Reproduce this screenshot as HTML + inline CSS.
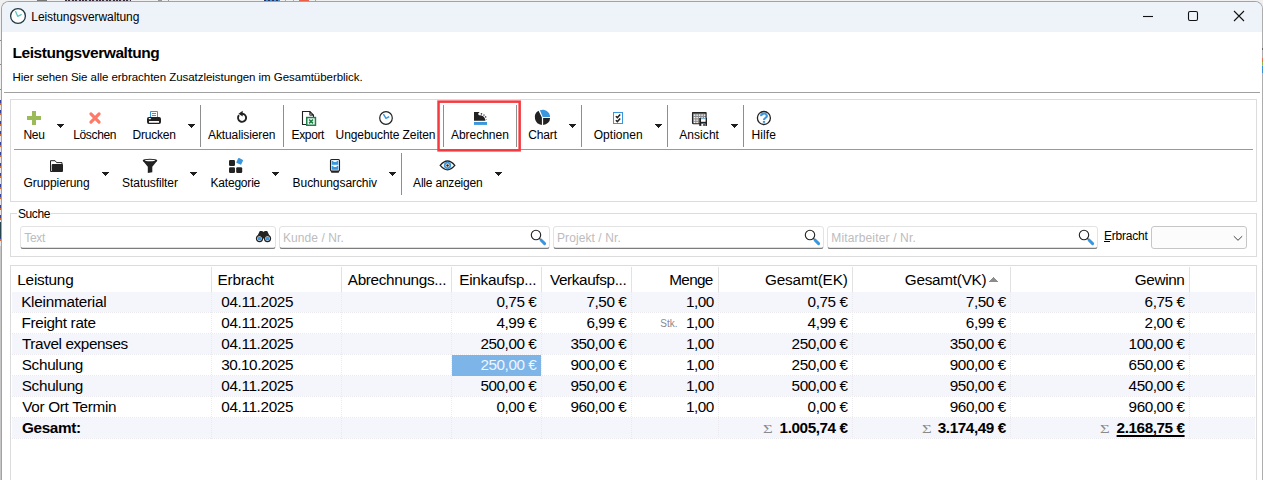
<!DOCTYPE html>
<html><head><meta charset="utf-8"><title>Leistungsverwaltung</title>
<style>
html,body{margin:0;padding:0;width:1263px;height:480px;overflow:hidden}
#root{position:absolute;left:0;top:0;width:1263px;height:480px;overflow:hidden;background:#f0f0f0}
body{width:1263px;height:480px;overflow:hidden;position:relative;background:#f0f0f0;font-family:"Liberation Sans",sans-serif}
.t{position:absolute;white-space:pre;line-height:1;font-family:"Liberation Sans",sans-serif;color:#000}
svg{position:absolute;overflow:visible}
</style></head><body>
<div id="root">
<div style="position:absolute;left:1px;top:1px;width:1260px;height:490px;border:1px solid #a2a2a2;border-right-color:#adadad;border-radius:8px 8px 0 0;background:#fff;overflow:hidden"><div style="height:30px;background:#eef3fa"></div></div>
<div style="position:absolute;left:1262px;top:48px;width:1px;height:2px;background:#666"></div>
<div style="position:absolute;left:1262px;top:58px;width:1px;height:4px;background:#e0714f"></div>
<div style="position:absolute;left:1262px;top:62px;width:1px;height:3px;background:#8bb84a"></div>
<div style="position:absolute;left:1262px;top:66px;width:1px;height:7px;background:#3a8fd6"></div>
<div style="position:absolute;left:37px;top:0px;width:10px;height:1px;background:#777"></div>
<div style="position:absolute;left:65px;top:0px;width:66px;height:1px;background:repeating-linear-gradient(90deg,#3a2a3a 0 2px,#c8c8d0 2px 3.4px)"></div>
<div style="position:absolute;left:158px;top:0px;width:4px;height:1px;background:#999"></div>
<div style="position:absolute;left:168px;top:0px;width:1px;height:1px;background:#999"></div>
<div style="position:absolute;left:264px;top:0px;width:16px;height:1px;background:repeating-linear-gradient(90deg,#335 0 2px,#4a90d0 2px 4px)"></div>
<div style="position:absolute;left:285px;top:0px;width:1px;height:1px;background:#aaa"></div>
<div style="position:absolute;left:293px;top:0px;width:1px;height:1px;background:#aaa"></div>
<div style="position:absolute;left:299px;top:0px;width:10px;height:1px;background:#e8604a"></div>
<div style="position:absolute;left:315px;top:0px;width:1px;height:1px;background:#aaa"></div>
<div style="position:absolute;left:0px;top:40px;width:1px;height:1px;background:#8a8a8a"></div>
<div style="position:absolute;left:0px;top:64px;width:1px;height:1px;background:#8a8a8a"></div>
<div style="position:absolute;left:0px;top:89px;width:1px;height:1px;background:#8a8a8a"></div>
<div style="position:absolute;left:0px;top:100px;width:1px;height:146px;background:repeating-linear-gradient(180deg,#34449c 0 3px,#c86a30 3px 5px,#e4e4e8 5px 10.5px)"></div>
<div style="position:absolute;left:0px;top:222px;width:1px;height:16px;background:#27464f"></div>
<div style="position:absolute;left:0px;top:246px;width:1px;height:234px;background:#c6c6c6"></div>
<svg style="left:9px;top:7px" width="18" height="18" viewBox="0 0 18 18"><circle cx="9" cy="9" r="7.4" fill="#fff" stroke="#1f3a46" stroke-width="1.3"/><path d="M6.6 4.6 L8.7 9.3 L12.2 7.6" fill="none" stroke="#5bc3c6" stroke-width="1.3" stroke-linecap="round" stroke-linejoin="round"/></svg>
<svg style="left:1140px;top:6px" width="110" height="20" viewBox="0 0 110 20"><g fill="none" stroke="#111" stroke-width="1.1"><path d="M3 10.5 H13"/><rect x="48.5" y="5.5" width="9" height="9" rx="1.5"/><path d="M94 5 L104 15 M104 5 L94 15"/></g></svg>
<div style="position:absolute;left:4px;top:92px;width:1256px;height:1px;background:#a0a0a0"></div>
<div style="position:absolute;left:10px;top:99px;width:1245px;height:101px;border:1px solid #dcdcdc"></div>
<div style="position:absolute;left:14px;top:149px;width:1239px;height:1px;background:#999"></div>
<svg style="left:57px;top:124px" width="7" height="4" shape-rendering="crispEdges"><path d="M0 0h7v1h-1v1h-1v1h-1v1h-1v-1h-1v-1h-1v-1h-1z" fill="#1e1e1e"/></svg>
<svg style="left:188px;top:124px" width="7" height="4" shape-rendering="crispEdges"><path d="M0 0h7v1h-1v1h-1v1h-1v1h-1v-1h-1v-1h-1v-1h-1z" fill="#1e1e1e"/></svg>
<svg style="left:569px;top:124px" width="7" height="4" shape-rendering="crispEdges"><path d="M0 0h7v1h-1v1h-1v1h-1v1h-1v-1h-1v-1h-1v-1h-1z" fill="#1e1e1e"/></svg>
<svg style="left:655px;top:124px" width="7" height="4" shape-rendering="crispEdges"><path d="M0 0h7v1h-1v1h-1v1h-1v1h-1v-1h-1v-1h-1v-1h-1z" fill="#1e1e1e"/></svg>
<svg style="left:731px;top:124px" width="7" height="4" shape-rendering="crispEdges"><path d="M0 0h7v1h-1v1h-1v1h-1v1h-1v-1h-1v-1h-1v-1h-1z" fill="#1e1e1e"/></svg>
<div style="position:absolute;left:200px;top:105px;width:1px;height:42px;background:#8e8e8e"></div>
<div style="position:absolute;left:283px;top:105px;width:1px;height:42px;background:#8e8e8e"></div>
<div style="position:absolute;left:443px;top:105px;width:1px;height:42px;background:#8e8e8e"></div>
<div style="position:absolute;left:516px;top:105px;width:1px;height:42px;background:#8e8e8e"></div>
<div style="position:absolute;left:581px;top:105px;width:1px;height:42px;background:#8e8e8e"></div>
<div style="position:absolute;left:667px;top:105px;width:1px;height:42px;background:#8e8e8e"></div>
<div style="position:absolute;left:743px;top:105px;width:1px;height:42px;background:#8e8e8e"></div>
<svg style="left:102px;top:172px" width="7" height="4" shape-rendering="crispEdges"><path d="M0 0h7v1h-1v1h-1v1h-1v1h-1v-1h-1v-1h-1v-1h-1z" fill="#1e1e1e"/></svg>
<svg style="left:190px;top:172px" width="7" height="4" shape-rendering="crispEdges"><path d="M0 0h7v1h-1v1h-1v1h-1v1h-1v-1h-1v-1h-1v-1h-1z" fill="#1e1e1e"/></svg>
<svg style="left:272px;top:172px" width="7" height="4" shape-rendering="crispEdges"><path d="M0 0h7v1h-1v1h-1v1h-1v1h-1v-1h-1v-1h-1v-1h-1z" fill="#1e1e1e"/></svg>
<svg style="left:389px;top:172px" width="7" height="4" shape-rendering="crispEdges"><path d="M0 0h7v1h-1v1h-1v1h-1v1h-1v-1h-1v-1h-1v-1h-1z" fill="#1e1e1e"/></svg>
<svg style="left:495px;top:172px" width="7" height="4" shape-rendering="crispEdges"><path d="M0 0h7v1h-1v1h-1v1h-1v1h-1v-1h-1v-1h-1v-1h-1z" fill="#1e1e1e"/></svg>
<div style="position:absolute;left:401px;top:153px;width:1px;height:42px;background:#8e8e8e"></div>
<svg style="left:436px;top:99px" width="87" height="55"><rect x="2.55" y="2.65" width="81.1" height="48.7" fill="none" stroke="#f5393f" stroke-width="2.5"/></svg>
<svg style="left:27px;top:111px" width="14" height="14"><path d="M5 0h4v5h5v4h-5v5h-4v-5h-5v-4h5z" fill="#9bbb59"/></svg>
<svg style="left:88px;top:111px" width="14" height="14"><path d="M3.1 3.1 L10.9 10.9 M10.9 3.1 L3.1 10.9" stroke="#ff7a66" stroke-width="2.2" stroke-linecap="square" fill="none"/><path d="M2.9 2.9 L11.1 11.1 M11.1 2.9 L2.9 11.1" stroke="#ff7a66" stroke-width="3" stroke-linecap="round" fill="none"/></svg>
<svg style="left:146px;top:110px" width="16" height="16"><path d="M4.5 7.5 V1.5 H11.5 V7.5" fill="#fff" stroke="#3a96dd" stroke-width="1"/><path d="M6 3.5h4M6 5.5h4" stroke="#3a96dd" stroke-width="1"/><rect x="1" y="6.9" width="14" height="7" rx="1.9" fill="#222"/><rect x="3" y="10.9" width="10" height="1.9" rx="0.4" fill="#fff"/><rect x="2.7" y="8.1" width="2.2" height="1.1" rx="0.4" fill="#fff"/></svg>
<svg style="left:234px;top:110px" width="16" height="16"><path d="M8.05 3.75 A4.05 4.05 0 1 1 4.95 5.2" fill="none" stroke="#222" stroke-width="1.9"/><path d="M4.5 3.65 L8.7 0.8 V6.5 Z" fill="#222"/></svg>
<svg style="left:301px;top:110px" width="17" height="17"><path d="M1.5 1.5h7.3l3.7 3.7v9.3h-11z" fill="#fff" stroke="#222" stroke-width="1.1"/><path d="M8.8 1.5v3.7h3.7z" fill="#222" stroke="#222" stroke-width="0.8"/><circle cx="9.9" cy="4.1" r="0.7" fill="#fff"/><rect x="5.75" y="7.55" width="8.7" height="7.7" fill="#fff" stroke="#1b8044" stroke-width="1.5"/><path d="M8.1 9.5l3.9 3.8M12 9.5l-3.9 3.8" stroke="#1b8044" stroke-width="1.7"/></svg>
<svg style="left:378px;top:110px" width="16" height="16"><circle cx="8" cy="8" r="6.3" fill="#fff" stroke="#222" stroke-width="1.2"/><path d="M5.4 4.2 L8 8.3 L11.2 6.6" fill="none" stroke="#3a96dd" stroke-width="1.5"/></svg>
<svg style="left:473px;top:111px" width="16" height="15"><path d="M1 1H6.2V1.9H5.3Q4.9 3.9 6.2 4.2L8.6 4.6Q11.9 5.7 12.4 9.7H1Z" fill="#222"/><path d="M7.8 2.7 Q13 4 13.4 8.4" fill="none" stroke="#222" stroke-width="1.3" stroke-dasharray="1.2 1.5"/><rect x="1" y="11" width="13" height="2.9" fill="#3a96dd"/></svg>
<svg style="left:534px;top:109px" width="17" height="17"><path d="M4.5 1.8 L7.9 8.5 V15.9 A7.6 7.6 0 0 1 4.5 1.8 Z" fill="#222"/><path d="M9.1 8.9 H16.1 A7 7 0 0 1 9.1 15.9 Z" fill="#222"/><path d="M8.7 8 L5.9 1.2 A7.5 7.5 0 0 1 16.1 8 Z" fill="#3a96dd"/></svg>
<svg style="left:612px;top:111px" width="12" height="14"><rect x="1.5" y="1.5" width="9" height="11" fill="#fff" stroke="#3a96dd" stroke-width="1"/><path d="M3.8 5.2l1.6 1.4 2.8-3M3.8 9.2l1.6 1.4 2.8-3" fill="none" stroke="#222" stroke-width="1.5"/></svg>
<svg style="left:691px;top:111px" width="17" height="16"><rect x="1.5" y="1.5" width="13.6" height="11.2" rx="1" fill="#8c8c8c" stroke="#222" stroke-width="1.1"/><rect x="1" y="1" width="14.6" height="1.6" rx="0.8" fill="#222"/><rect x="2.9" y="3.5" width="1.4" height="1.3" fill="#fff"/><rect x="2.9" y="6" width="1.4" height="1.3" fill="#fff"/><rect x="2.9" y="8.5" width="1.4" height="1.3" fill="#fff"/><rect x="2.9" y="10.8" width="1.4" height="1.3" fill="#fff"/><rect x="5.4" y="3.5" width="1.4" height="1.3" fill="#fff"/><rect x="5.4" y="6" width="1.4" height="1.3" fill="#fff"/><rect x="5.4" y="8.5" width="1.4" height="1.3" fill="#fff"/><rect x="5.4" y="10.8" width="1.4" height="1.3" fill="#fff"/><rect x="7.9" y="3.5" width="1.4" height="1.3" fill="#fff"/><rect x="7.9" y="6" width="1.4" height="1.3" fill="#fff"/><rect x="7.9" y="8.5" width="1.4" height="1.3" fill="#fff"/><rect x="7.9" y="10.8" width="1.4" height="1.3" fill="#fff"/><rect x="10.4" y="3.5" width="1.4" height="1.3" fill="#fff"/><rect x="10.4" y="6" width="1.4" height="1.3" fill="#fff"/><rect x="10.4" y="8.5" width="1.4" height="1.3" fill="#fff"/><rect x="10.4" y="10.8" width="1.4" height="1.3" fill="#fff"/><rect x="12.9" y="3.5" width="1.4" height="1.3" fill="#fff"/><rect x="12.9" y="6" width="1.4" height="1.3" fill="#fff"/><rect x="12.9" y="8.5" width="1.4" height="1.3" fill="#fff"/><rect x="12.9" y="10.8" width="1.4" height="1.3" fill="#fff"/><rect x="8.25" y="6.9" width="7.75" height="8" fill="#222"/><rect x="10" y="7.4" width="4.6" height="3.4" fill="#fff"/><rect x="10" y="7.3" width="4.6" height="0.9" fill="#6ab4e8"/><rect x="10.3" y="12.6" width="4.1" height="2.3" fill="#fff"/><rect x="12.2" y="12.9" width="1.7" height="2" fill="#444"/></svg>
<svg style="left:756px;top:110px" width="16" height="16"><circle cx="7.9" cy="8" r="6.5" fill="#fff" stroke="#222" stroke-width="1.3"/><path d="M5.2 6.2 A2.8 2.4 0 1 1 9.2 8.1 Q8 8.8 8 10" fill="none" stroke="#3a96dd" stroke-width="2.1"/><rect x="6.9" y="10.9" width="2.2" height="1.9" fill="#3a96dd"/></svg>
<svg style="left:49px;top:159px" width="16" height="15"><path d="M1.5 12.5V1.7h4.6l1.5 1.9h5.4v2" fill="#fff" stroke="#222" stroke-width="1"/><rect x="2.7" y="5" width="11.3" height="8" rx="0.9" fill="#222"/><path d="M1.5 12.5h2" stroke="#222"/></svg>
<svg style="left:142px;top:158px" width="16" height="16"><ellipse cx="8" cy="2.6" rx="7.3" ry="1.9" fill="#222"/><path d="M0.8 2.8 H15.2 L10.3 8.8 V14.2 L5.8 15 V8.8 Z" fill="#222"/><ellipse cx="8" cy="2.5" rx="5.2" ry="0.75" fill="#fff"/></svg>
<svg style="left:228px;top:157px" width="17" height="17"><rect x="1" y="3.1" width="6" height="5.8" rx="1.2" fill="#222"/><rect x="1" y="10.2" width="6" height="5.8" rx="1.2" fill="#222"/><rect x="8.2" y="10.2" width="6" height="5.8" rx="1.2" fill="#222"/><rect x="9" y="1.6" width="5.4" height="5.4" rx="0.8" fill="#3a96dd" transform="rotate(25 11.7 4.3)"/></svg>
<svg style="left:329px;top:158px" width="12" height="16"><rect x="2" y="12.6" width="8" height="2.2" rx="0.7" fill="#222"/><rect x="1.5" y="1.5" width="9" height="11.5" rx="1" fill="#e4f1fb" stroke="#222" stroke-width="1.1"/><rect x="2.75" y="3" width="6.5" height="3.75" fill="#3a96dd"/><rect x="2.75" y="8" width="6.5" height="3.75" fill="#3a96dd"/><rect x="4.4" y="2.8" width="3.2" height="1.2" fill="#fff"/><rect x="4.4" y="7.8" width="3.2" height="1.2" fill="#fff"/></svg>
<svg style="left:439px;top:159px" width="17" height="13"><path d="M1.2 6.4 Q8.5 -2.4 15.8 6.4 Q8.5 15.2 1.2 6.4Z" fill="#fff" stroke="#222" stroke-width="1.3"/><circle cx="8.5" cy="6.4" r="2.8" fill="#fff" stroke="#3a96dd" stroke-width="1.7"/><circle cx="8.5" cy="6.4" r="1.25" fill="#222"/></svg>
<div style="position:absolute;left:10px;top:213px;width:1245px;height:42px;border:1px solid #dcdcdc"></div>
<div style="position:absolute;left:17px;top:208px;width:34px;height:12px;background:#fff"></div>
<svg style="left:19px;top:225px" width="258.0" height="26"><rect x="1.5" y="1.5" width="255.0" height="22" rx="2.5" fill="#fff" stroke="#e3e3e3"/><path d="M2.2 22.4 Q2.6 23.35 4 23.35 H254.0 Q255.4 23.35 255.8 22.4" fill="none" stroke="#7c7c7c" stroke-width="1.25"/></svg>
<svg style="left:278px;top:225px" width="273.0" height="26"><rect x="1.5" y="1.5" width="270.0" height="22" rx="2.5" fill="#fff" stroke="#e3e3e3"/><path d="M2.2 22.4 Q2.6 23.35 4 23.35 H269.0 Q270.4 23.35 270.8 22.4" fill="none" stroke="#7c7c7c" stroke-width="1.25"/></svg>
<svg style="left:552px;top:225px" width="273.0" height="26"><rect x="1.5" y="1.5" width="270.0" height="22" rx="2.5" fill="#fff" stroke="#e3e3e3"/><path d="M2.2 22.4 Q2.6 23.35 4 23.35 H269.0 Q270.4 23.35 270.8 22.4" fill="none" stroke="#7c7c7c" stroke-width="1.25"/></svg>
<svg style="left:826px;top:225px" width="273.0" height="26"><rect x="1.5" y="1.5" width="270.0" height="22" rx="2.5" fill="#fff" stroke="#e3e3e3"/><path d="M2.2 22.4 Q2.6 23.35 4 23.35 H269.0 Q270.4 23.35 270.8 22.4" fill="none" stroke="#7c7c7c" stroke-width="1.25"/></svg>
<svg style="left:255px;top:230px" width="17" height="13"><path d="M4.8 1h2.4l.9.8h.8l.9-.8h2.4l3.6 7.4H1.2z" fill="#222"/><circle cx="4.5" cy="8.6" r="3" fill="#fff" stroke="#222" stroke-width="1.3"/><circle cx="12.5" cy="8.6" r="3" fill="#fff" stroke="#222" stroke-width="1.3"/><circle cx="4.5" cy="8.6" r="1.9" fill="#3a96dd"/><circle cx="12.5" cy="8.6" r="1.9" fill="#3a96dd"/></svg>
<svg style="left:530px;top:229px" width="17" height="17"><circle cx="6" cy="6" r="4.7" fill="#fff" stroke="#222" stroke-width="1.1"/><path d="M9.4 9.4 L11 11" stroke="#222" stroke-width="1.3"/><path d="M11.2 11.2 L14.6 14.6" stroke="#3a96dd" stroke-width="3" stroke-linecap="round"/></svg>
<svg style="left:804px;top:229px" width="17" height="17"><circle cx="6" cy="6" r="4.7" fill="#fff" stroke="#222" stroke-width="1.1"/><path d="M9.4 9.4 L11 11" stroke="#222" stroke-width="1.3"/><path d="M11.2 11.2 L14.6 14.6" stroke="#3a96dd" stroke-width="3" stroke-linecap="round"/></svg>
<svg style="left:1078px;top:229px" width="17" height="17"><circle cx="6" cy="6" r="4.7" fill="#fff" stroke="#222" stroke-width="1.1"/><path d="M9.4 9.4 L11 11" stroke="#222" stroke-width="1.3"/><path d="M11.2 11.2 L14.6 14.6" stroke="#3a96dd" stroke-width="3" stroke-linecap="round"/></svg>
<div style="position:absolute;left:1104.3px;top:241px;width:6px;height:1px;background:#000"></div>
<div style="position:absolute;left:1151px;top:226px;width:94px;height:20.6px;border:1px solid #c6c6c6;border-radius:3px;background:#fcfcfc"></div>
<svg style="left:1233px;top:235px" width="10" height="7"><path d="M0.8 1.2 L5 5.3 L9.2 1.2" fill="none" stroke="#444" stroke-width="1"/></svg>
<div style="position:absolute;left:10px;top:265px;width:1245px;height:230px;border:1px solid #dcdcdc;background:#fff"></div>
<div style="position:absolute;left:211px;top:267px;width:1px;height:25px;background:#e2e2e2"></div>
<div style="position:absolute;left:341px;top:267px;width:1px;height:25px;background:#e2e2e2"></div>
<div style="position:absolute;left:451px;top:267px;width:1px;height:25px;background:#e2e2e2"></div>
<div style="position:absolute;left:541px;top:267px;width:1px;height:25px;background:#e2e2e2"></div>
<div style="position:absolute;left:631px;top:267px;width:1px;height:25px;background:#e2e2e2"></div>
<div style="position:absolute;left:718px;top:267px;width:1px;height:25px;background:#e2e2e2"></div>
<div style="position:absolute;left:852px;top:267px;width:1px;height:25px;background:#e2e2e2"></div>
<div style="position:absolute;left:1010px;top:267px;width:1px;height:25px;background:#e2e2e2"></div>
<div style="position:absolute;left:1189px;top:267px;width:1px;height:25px;background:#e2e2e2"></div>
<svg style="left:989px;top:277px" width="9" height="5" shape-rendering="crispEdges"><path d="M4 0h1v1h1v1h1v1h1v1h1v1h-9v-1h1v-1h1v-1h1v-1h1z" fill="#8c8c8c"/></svg>
<div style="position:absolute;left:12px;top:292px;width:1243px;height:20px;background:#f5f5fc"></div>
<div style="position:absolute;left:12px;top:312px;width:1243px;height:1px;background:repeating-linear-gradient(90deg,#e9e9ee 0 1px,transparent 1px 2px)"></div>
<div style="position:absolute;left:12px;top:333px;width:1243px;height:1px;background:repeating-linear-gradient(90deg,#e9e9ee 0 1px,transparent 1px 2px)"></div>
<div style="position:absolute;left:12px;top:334px;width:1243px;height:20px;background:#f5f5fc"></div>
<div style="position:absolute;left:12px;top:354px;width:1243px;height:1px;background:repeating-linear-gradient(90deg,#e9e9ee 0 1px,transparent 1px 2px)"></div>
<div style="position:absolute;left:12px;top:375px;width:1243px;height:1px;background:repeating-linear-gradient(90deg,#e9e9ee 0 1px,transparent 1px 2px)"></div>
<div style="position:absolute;left:12px;top:376px;width:1243px;height:20px;background:#f5f5fc"></div>
<div style="position:absolute;left:12px;top:396px;width:1243px;height:1px;background:repeating-linear-gradient(90deg,#e9e9ee 0 1px,transparent 1px 2px)"></div>
<div style="position:absolute;left:12px;top:417px;width:1243px;height:1px;background:repeating-linear-gradient(90deg,#e9e9ee 0 1px,transparent 1px 2px)"></div>
<div style="position:absolute;left:12px;top:418px;width:1243px;height:20px;background:#f5f5fc"></div>
<div style="position:absolute;left:12px;top:438px;width:1243px;height:1px;background:repeating-linear-gradient(90deg,#e9e9ee 0 1px,transparent 1px 2px)"></div>
<div style="position:absolute;left:211px;top:292px;width:1px;height:147px;background:repeating-linear-gradient(180deg,#e9e9ee 0 1px,transparent 1px 2px)"></div>
<div style="position:absolute;left:341px;top:292px;width:1px;height:147px;background:repeating-linear-gradient(180deg,#e9e9ee 0 1px,transparent 1px 2px)"></div>
<div style="position:absolute;left:451px;top:292px;width:1px;height:147px;background:repeating-linear-gradient(180deg,#e9e9ee 0 1px,transparent 1px 2px)"></div>
<div style="position:absolute;left:541px;top:292px;width:1px;height:147px;background:repeating-linear-gradient(180deg,#e9e9ee 0 1px,transparent 1px 2px)"></div>
<div style="position:absolute;left:631px;top:292px;width:1px;height:147px;background:repeating-linear-gradient(180deg,#e9e9ee 0 1px,transparent 1px 2px)"></div>
<div style="position:absolute;left:718px;top:292px;width:1px;height:147px;background:repeating-linear-gradient(180deg,#e9e9ee 0 1px,transparent 1px 2px)"></div>
<div style="position:absolute;left:852px;top:292px;width:1px;height:147px;background:repeating-linear-gradient(180deg,#e9e9ee 0 1px,transparent 1px 2px)"></div>
<div style="position:absolute;left:1010px;top:292px;width:1px;height:147px;background:repeating-linear-gradient(180deg,#e9e9ee 0 1px,transparent 1px 2px)"></div>
<div style="position:absolute;left:1189px;top:292px;width:1px;height:147px;background:repeating-linear-gradient(180deg,#e9e9ee 0 1px,transparent 1px 2px)"></div>
<div style="position:absolute;left:452px;top:355px;width:89px;height:21px;background:#7db5e9"></div>
<span class="t" style="left:31.30px;top:11px;font-size:12px;letter-spacing:-0.074px;">Leistungsverwaltung</span>
<span class="t" style="left:12.40px;top:45px;font-size:15.5px;font-weight:700;letter-spacing:-0.423px;">Leistungsverwaltung</span>
<span class="t" style="left:12.60px;top:72px;font-size:11.5px;letter-spacing:-0.042px;">Hier sehen Sie alle erbrachten Zusatzleistungen im Gesamtüberblick.</span>
<span class="t" style="left:23.50px;top:129px;font-size:12px;letter-spacing:-0.305px;">Neu</span>
<span class="t" style="left:73.20px;top:129px;font-size:12px;letter-spacing:-0.339px;">Löschen</span>
<span class="t" style="left:132.60px;top:129px;font-size:12px;letter-spacing:-0.227px;">Drucken</span>
<span class="t" style="left:208.00px;top:129px;font-size:12px;letter-spacing:-0.100px;">Aktualisieren</span>
<span class="t" style="left:291.60px;top:129px;font-size:12px;letter-spacing:-0.381px;">Export</span>
<span class="t" style="left:335.60px;top:129px;font-size:12px;letter-spacing:-0.094px;">Ungebuchte Zeiten</span>
<span class="t" style="left:451.00px;top:129px;font-size:12px;letter-spacing:-0.027px;">Abrechnen</span>
<span class="t" style="left:528.20px;top:129px;font-size:12px;letter-spacing:-0.129px;">Chart</span>
<span class="t" style="left:593.70px;top:129px;font-size:12px;letter-spacing:0.037px;">Optionen</span>
<span class="t" style="left:679.30px;top:129px;font-size:12px;letter-spacing:0.049px;">Ansicht</span>
<span class="t" style="left:751.40px;top:129px;font-size:12px;letter-spacing:0.137px;">Hilfe</span>
<span class="t" style="left:23.50px;top:177px;font-size:12px;letter-spacing:-0.056px;">Gruppierung</span>
<span class="t" style="left:122.10px;top:177px;font-size:12px;letter-spacing:-0.075px;">Statusfilter</span>
<span class="t" style="left:210.50px;top:177px;font-size:12px;letter-spacing:-0.197px;">Kategorie</span>
<span class="t" style="left:292.60px;top:177px;font-size:12px;letter-spacing:-0.071px;">Buchungsarchiv</span>
<span class="t" style="left:413.10px;top:177px;font-size:12px;letter-spacing:-0.205px;">Alle anzeigen</span>
<span class="t" style="left:18.00px;top:208px;font-size:12px;letter-spacing:-0.406px;">Suche</span>
<span class="t" style="left:24.20px;top:232px;font-size:12px;color:#bcbcbe;letter-spacing:-0.254px;">Text</span>
<span class="t" style="left:283.00px;top:232px;font-size:12px;color:#bcbcbe;letter-spacing:0.068px;">Kunde / Nr.</span>
<span class="t" style="left:557.00px;top:232px;font-size:12px;color:#bcbcbe;letter-spacing:0.086px;">Projekt / Nr.</span>
<span class="t" style="left:831.30px;top:232px;font-size:12px;color:#bcbcbe;letter-spacing:0.151px;">Mitarbeiter / Nr.</span>
<span class="t" style="left:1104.00px;top:230px;font-size:12px;letter-spacing:-0.220px;">Erbracht</span>
<span class="t" style="left:17.34px;top:272px;font-size:15.3px;letter-spacing:-0.215px;">Leistung</span>
<span class="t" style="left:217.44px;top:272px;font-size:15.3px;letter-spacing:-0.178px;">Erbracht</span>
<span class="t" style="left:347.77px;top:272px;font-size:15.3px;letter-spacing:-0.329px;">Abrechnungs...</span>
<span class="t" style="left:459.24px;top:272px;font-size:15.3px;letter-spacing:-0.253px;">Einkaufsp...</span>
<span class="t" style="left:549.93px;top:272px;font-size:15.3px;letter-spacing:-0.365px;">Verkaufsp...</span>
<span class="t" style="left:669.24px;top:272px;font-size:15.3px;letter-spacing:-0.662px;">Menge</span>
<span class="t" style="left:765.03px;top:272px;font-size:15.3px;letter-spacing:-0.149px;">Gesamt(EK)</span>
<span class="t" style="left:904.83px;top:272px;font-size:15.3px;letter-spacing:-0.260px;">Gesamt(VK)</span>
<span class="t" style="left:1134.73px;top:272px;font-size:15.3px;letter-spacing:-0.342px;">Gewinn</span>
<span class="t" style="left:21.14px;top:294px;font-size:15.3px;letter-spacing:-0.245px;">Kleinmaterial</span>
<span class="t" style="left:221.30px;top:294px;font-size:15.3px;letter-spacing:-0.366px;">04.11.2025</span>
<span class="t" style="left:496.40px;top:294px;font-size:15.3px;letter-spacing:-0.422px;">0,75 €</span>
<span class="t" style="left:586.40px;top:294px;font-size:15.3px;letter-spacing:-0.422px;">7,50 €</span>
<span class="t" style="left:685.90px;top:294px;font-size:15.3px;letter-spacing:-0.445px;">1,00</span>
<span class="t" style="left:807.60px;top:294px;font-size:15.3px;letter-spacing:-0.422px;">0,75 €</span>
<span class="t" style="left:965.80px;top:294px;font-size:15.3px;letter-spacing:-0.422px;">7,50 €</span>
<span class="t" style="left:1144.60px;top:294px;font-size:15.3px;letter-spacing:-0.422px;">6,75 €</span>
<span class="t" style="left:21.44px;top:315px;font-size:15.3px;letter-spacing:-0.335px;">Freight rate</span>
<span class="t" style="left:221.30px;top:315px;font-size:15.3px;letter-spacing:-0.366px;">04.11.2025</span>
<span class="t" style="left:496.40px;top:315px;font-size:15.3px;letter-spacing:-0.422px;">4,99 €</span>
<span class="t" style="left:586.40px;top:315px;font-size:15.3px;letter-spacing:-0.422px;">6,99 €</span>
<span class="t" style="left:660.30px;top:319px;font-size:10px;color:#8a8a8a;">Stk.</span>
<span class="t" style="left:685.90px;top:315px;font-size:15.3px;letter-spacing:-0.445px;">1,00</span>
<span class="t" style="left:807.60px;top:315px;font-size:15.3px;letter-spacing:-0.422px;">4,99 €</span>
<span class="t" style="left:965.80px;top:315px;font-size:15.3px;letter-spacing:-0.422px;">6,99 €</span>
<span class="t" style="left:1144.60px;top:315px;font-size:15.3px;letter-spacing:-0.422px;">2,00 €</span>
<span class="t" style="left:21.96px;top:336px;font-size:15.3px;letter-spacing:-0.391px;">Travel expenses</span>
<span class="t" style="left:221.30px;top:336px;font-size:15.3px;letter-spacing:-0.366px;">04.11.2025</span>
<span class="t" style="left:480.40px;top:336px;font-size:15.3px;letter-spacing:-0.443px;">250,00 €</span>
<span class="t" style="left:570.40px;top:336px;font-size:15.3px;letter-spacing:-0.443px;">350,00 €</span>
<span class="t" style="left:685.90px;top:336px;font-size:15.3px;letter-spacing:-0.445px;">1,00</span>
<span class="t" style="left:791.60px;top:336px;font-size:15.3px;letter-spacing:-0.443px;">250,00 €</span>
<span class="t" style="left:949.80px;top:336px;font-size:15.3px;letter-spacing:-0.443px;">350,00 €</span>
<span class="t" style="left:1128.60px;top:336px;font-size:15.3px;letter-spacing:-0.443px;">100,00 €</span>
<span class="t" style="left:21.71px;top:357px;font-size:15.3px;letter-spacing:-0.302px;">Schulung</span>
<span class="t" style="left:221.32px;top:357px;font-size:15.3px;letter-spacing:-0.493px;">30.10.2025</span>
<span class="t" style="left:480.40px;top:357px;font-size:15.3px;color:#eef5fd;letter-spacing:-0.443px;">250,00 €</span>
<span class="t" style="left:570.40px;top:357px;font-size:15.3px;letter-spacing:-0.443px;">900,00 €</span>
<span class="t" style="left:685.90px;top:357px;font-size:15.3px;letter-spacing:-0.445px;">1,00</span>
<span class="t" style="left:791.60px;top:357px;font-size:15.3px;letter-spacing:-0.443px;">250,00 €</span>
<span class="t" style="left:949.80px;top:357px;font-size:15.3px;letter-spacing:-0.443px;">900,00 €</span>
<span class="t" style="left:1128.60px;top:357px;font-size:15.3px;letter-spacing:-0.443px;">650,00 €</span>
<span class="t" style="left:21.71px;top:378px;font-size:15.3px;letter-spacing:-0.302px;">Schulung</span>
<span class="t" style="left:221.30px;top:378px;font-size:15.3px;letter-spacing:-0.366px;">04.11.2025</span>
<span class="t" style="left:480.40px;top:378px;font-size:15.3px;letter-spacing:-0.443px;">500,00 €</span>
<span class="t" style="left:570.40px;top:378px;font-size:15.3px;letter-spacing:-0.443px;">950,00 €</span>
<span class="t" style="left:685.90px;top:378px;font-size:15.3px;letter-spacing:-0.445px;">1,00</span>
<span class="t" style="left:791.60px;top:378px;font-size:15.3px;letter-spacing:-0.443px;">500,00 €</span>
<span class="t" style="left:949.80px;top:378px;font-size:15.3px;letter-spacing:-0.443px;">950,00 €</span>
<span class="t" style="left:1128.60px;top:378px;font-size:15.3px;letter-spacing:-0.443px;">450,00 €</span>
<span class="t" style="left:22.23px;top:399px;font-size:15.3px;letter-spacing:-0.305px;">Vor Ort Termin</span>
<span class="t" style="left:221.30px;top:399px;font-size:15.3px;letter-spacing:-0.366px;">04.11.2025</span>
<span class="t" style="left:496.40px;top:399px;font-size:15.3px;letter-spacing:-0.422px;">0,00 €</span>
<span class="t" style="left:570.40px;top:399px;font-size:15.3px;letter-spacing:-0.443px;">960,00 €</span>
<span class="t" style="left:685.90px;top:399px;font-size:15.3px;letter-spacing:-0.445px;">1,00</span>
<span class="t" style="left:807.60px;top:399px;font-size:15.3px;letter-spacing:-0.422px;">0,00 €</span>
<span class="t" style="left:949.80px;top:399px;font-size:15.3px;letter-spacing:-0.443px;">960,00 €</span>
<span class="t" style="left:1128.60px;top:399px;font-size:15.3px;letter-spacing:-0.443px;">960,00 €</span>
<span class="t" style="left:22.07px;top:420px;font-size:15.3px;font-weight:700;letter-spacing:-0.370px;">Gesamt:</span>
<span class="t" style="left:779.60px;top:420px;font-size:15.3px;font-weight:700;letter-spacing:-0.431px;">1.005,74 €</span>
<span class="t" style="left:937.80px;top:420px;font-size:15.3px;font-weight:700;letter-spacing:-0.431px;">3.174,49 €</span>
<span class="t" style="left:1116.60px;top:420px;font-size:15.3px;font-weight:700;letter-spacing:-0.431px;text-decoration:underline;text-decoration-thickness:2px;text-underline-offset:2.2px;text-decoration-skip-ink:none;">2.168,75 €</span>
<span class="t" style="left:763.00px;top:423px;font-size:12.8px;color:#8a8a8a;font-family:'Liberation Serif',serif;transform:scaleX(1.3);transform-origin:0 0;">Σ</span>
<span class="t" style="left:921.50px;top:423px;font-size:12.8px;color:#8a8a8a;font-family:'Liberation Serif',serif;transform:scaleX(1.3);transform-origin:0 0;">Σ</span>
<span class="t" style="left:1100.30px;top:423px;font-size:12.8px;color:#8a8a8a;font-family:'Liberation Serif',serif;transform:scaleX(1.3);transform-origin:0 0;">Σ</span>
</div>
</body></html>
